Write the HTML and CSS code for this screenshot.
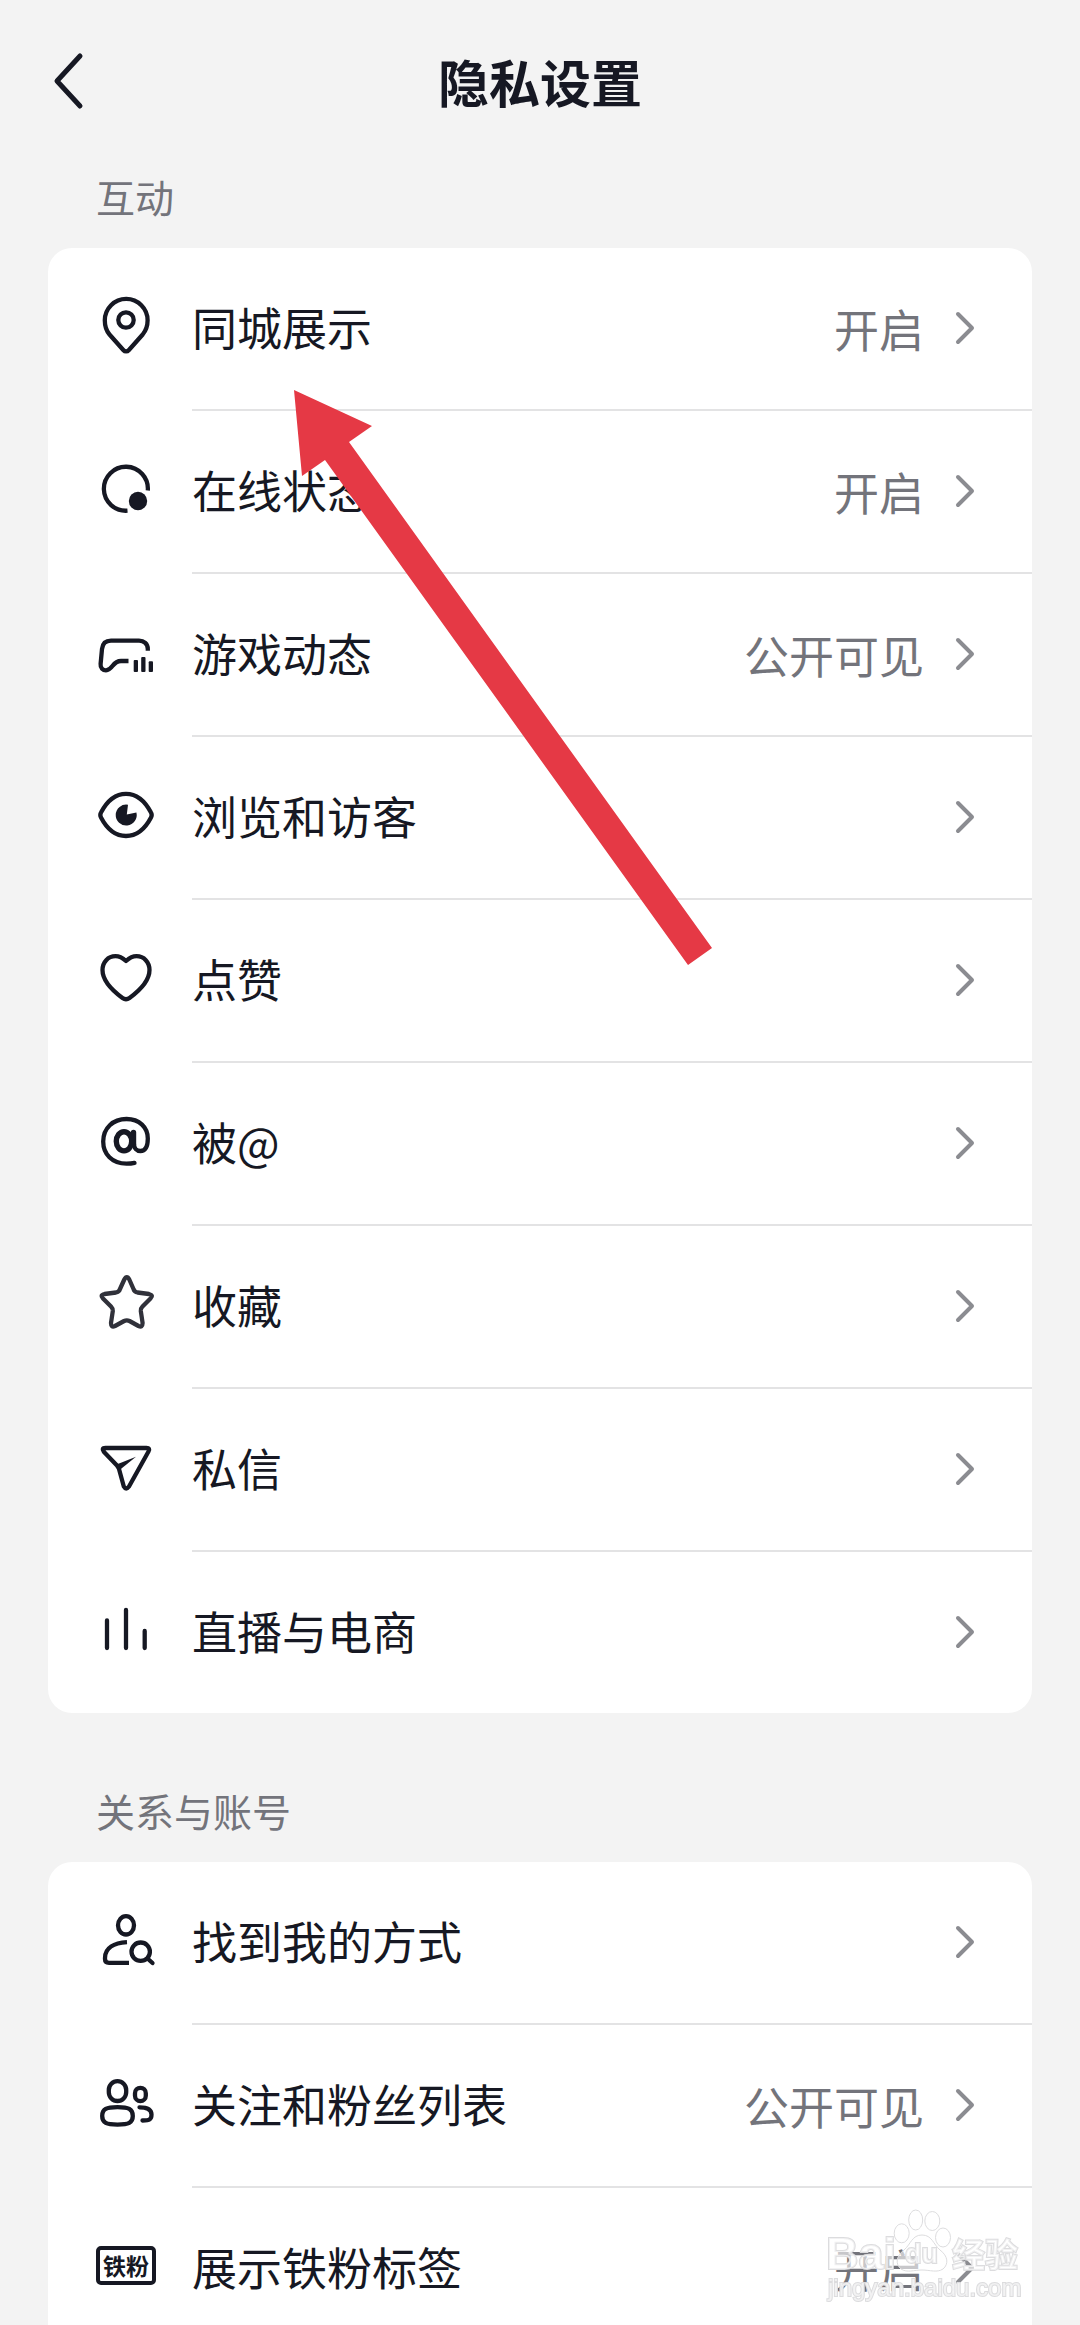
FILE: index.html
```
<!DOCTYPE html>
<html lang="zh-CN">

<head>
    <meta charset="UTF-8">
    <meta name="viewport" content="width=device-width, initial-scale=1.0">
    <title>隐私设置</title>
    <link rel="stylesheet" href="styles.css">
</head>

<body>
    <svg class="sprite" aria-hidden="true">
        <symbol id="arrow" viewBox="0 0 24 36">
            <path d="M5 4l14 14L5 32" />
        </symbol>
    </svg>

    <div class="page">
        <header class="header">
            <button class="back" aria-label="返回">
                <svg viewBox="0 0 36 60"><path d="M30 5L7 30l23 25" /></svg>
            </button>
            <h1>隐私设置</h1>
        </header>

        <main>
            <section>
                <h2>互动</h2>
                <div class="card">
                    <a class="row" href="#city">
                        <svg class="icon" viewBox="0 0 60 60">
                            <path d="M27.5 55.2L13.5 39.5C10 35.5 8.8 31 8.8 25.3a21.4 21.4 0 0 1 42.8 0C51.6 31 50 35.5 46.7 39.5L32.7 55.2a3.5 3.5 0 0 1-5.2 0z" />
                            <circle cx="30" cy="25" r="7.7" />
                        </svg>
                        <span class="info"><span class="name">同城展示</span><span class="value">开启</span><svg class="arrow"><use href="#arrow" /></svg></span>
                    </a>
                    <a class="row" href="#online">
                        <svg class="icon" viewBox="0 0 60 60">
                            <path d="M31.5 52.7A22 22 0 1 1 51.8 32.5" />
                            <circle class="fill" cx="42" cy="43" r="9.2" />
                        </svg>
                        <span class="info"><span class="name">在线状态</span><span class="value">开启</span><svg class="arrow"><use href="#arrow" /></svg></span>
                    </a>
                    <a class="row" href="#games">
                        <svg class="icon" viewBox="0 0 60 60">
                            <path d="M51.8 29.7V28C51.8 23 48 19.6 43 19.6H15C9 19.6 6.5 23 6 28L4.6 43C4.2 47 7 49.3 10 49.3C17 49.3 16 40 25 40H32.5" />
                            <rect class="fill" x="37.7" y="39" width="4.3" height="12" rx="1" />
                            <rect class="fill" x="45.2" y="36" width="4.3" height="15" rx="1" />
                            <rect class="fill" x="52.7" y="40.3" width="4.3" height="10.7" rx="1" />
                        </svg>
                        <span class="info"><span class="name">游戏动态</span><span class="value">公开可见</span><svg class="arrow"><use href="#arrow" /></svg></span>
                    </a>
                    <a class="row" href="#visitors">
                        <svg class="icon" viewBox="0 0 60 60">
                            <path d="M5 28.5C11 17 20 9.8 30 9.8S49 17 55 28.5C56 30.3 56 31.7 55 33.5C49 45 40 52 30 52S11 45 5 33.5C4 31.7 4 30.3 5 28.5z" />
                            <path class="fill" d="M32 20.7A10.5 10.5 0 1 0 40.4 28.5L30.8 30.5z" />
                        </svg>
                        <span class="info"><span class="name">浏览和访客</span><svg class="arrow"><use href="#arrow" /></svg></span>
                    </a>
                    <a class="row" href="#likes">
                        <svg class="icon" viewBox="0 0 60 60">
                            <path d="M30 14C27 11.3 23.5 9.2 19.5 9.2C12 9.2 6.5 15.2 6.5 23C6.5 34 17 44 26.5 51C29 52.8 31 52.8 33.5 51C43 44 53.5 34 53.5 23C53.5 15.2 48 9.2 40.5 9.2C36.5 9.2 33 11.3 30 14z" />
                        </svg>
                        <span class="info"><span class="name">点赞</span><svg class="arrow"><use href="#arrow" /></svg></span>
                    </a>
                    <a class="row" href="#mentions">
                        <svg class="icon round" viewBox="0 0 60 60">
                            <path d="M38.5 52.9C36 53.5 33 53.7 30.5 53.7C16 53.7 7.2 44 7.2 31.5C7.2 18 17 9 30.5 9C43.5 9 51.8 17.5 51.8 28.5C51.8 36 49.5 41 44.5 41C40.5 41 38 38 38 34" />
                            <path class="bold" d="M37.5 22.5V34" />
                            <ellipse class="bold" cx="28" cy="31.3" rx="7.7" ry="9.6" />
                        </svg>
                        <span class="info"><span class="name">被@</span><svg class="arrow"><use href="#arrow" /></svg></span>
                    </a>
                    <a class="row" href="#favorites">
                        <svg class="icon soft" viewBox="0 0 60 60">
                            <path d="M28.3 6.5Q30.8 1.8 33.3 6.5L37.5 16Q38.5 19 41.5 19.5L53 21Q58 22 54.5 25.5L46.5 33.5Q44.5 35.5 44.8 38L46.6 50Q46.5 55 42.5 53L33.5 48Q30.8 46.7 28.1 48L19 53Q15 55 15 50L16.8 38Q17 35.5 15 33.5L7 25.5Q3.5 22 8.5 21L20 19.5Q23 19 24 16z" />
                        </svg>
                        <span class="info"><span class="name">收藏</span><svg class="arrow"><use href="#arrow" /></svg></span>
                    </a>
                    <a class="row" href="#messages">
                        <svg class="icon" viewBox="0 0 60 60">
                            <path d="M9.5 12H50.5Q54.5 12 52.5 15.5L33 50.5Q30 54.5 27.8 50.5L23 33Q22.5 31.3 21 29.5L7.8 15.8Q5 12 9.5 12z" />
                            <path class="fill" d="M20.5 28.5L40 20.7L23 34.5z" />
                        </svg>
                        <span class="info"><span class="name">私信</span><svg class="arrow"><use href="#arrow" /></svg></span>
                    </a>
                    <a class="row" href="#live">
                        <svg class="icon round" viewBox="0 0 60 60">
                            <path d="M11 22.5V50M30 12V50M48.7 33V50" />
                        </svg>
                        <span class="info"><span class="name">直播与电商</span><svg class="arrow"><use href="#arrow" /></svg></span>
                    </a>
                </div>
            </section>

            <section>
                <h2>关系与账号</h2>
                <div class="card">
                    <a class="row" href="#find-me">
                        <svg class="icon" viewBox="0 0 60 60">
                            <ellipse cx="30" cy="16.3" rx="8" ry="9.2" />
                            <path d="M31 33.2C18 34 9 39 9 49V50Q9 53.8 13 53.8H33" />
                            <circle cx="44.7" cy="42.7" r="9.2" />
                            <path class="cap" d="M51.5 49.5L56.5 54" />
                        </svg>
                        <span class="info"><span class="name">找到我的方式</span><svg class="arrow"><use href="#arrow" /></svg></span>
                    </a>
                    <a class="row" href="#follow-list">
                        <svg class="icon round" viewBox="0 0 60 60">
                            <rect x="12.8" y="9.2" width="17.4" height="19.8" rx="8.7" />
                            <path d="M6.2 44C6.2 37 10.5 35.2 21.5 35.2S36.8 37 36.8 44S32.5 52.6 21.5 52.6S6.2 51 6.2 44z" />
                            <rect x="39" y="15.8" width="10.8" height="13.3" rx="5.4" />
                            <path d="M43.5 35.3C51 35.3 55.5 37 55.5 42.5C55.5 47 54 48.5 46.5 48.5" />
                        </svg>
                        <span class="info"><span class="name">关注和粉丝列表</span><span class="value">公开可见</span><svg class="arrow"><use href="#arrow" /></svg></span>
                    </a>
                    <a class="row" href="#fan-badge">
                        <span class="badge">铁粉</span>
                        <span class="info"><span class="name">展示铁粉标签</span><span class="value">开启</span><svg class="arrow"><use href="#arrow" /></svg></span>
                    </a>
                </div>
            </section>
        </main>
    </div>

    <svg class="pointer" viewBox="0 0 420 576" aria-hidden="true">
        <path d="M0 0L78 36L55 52L418 558L394 575L31 70L8 86z" />
    </svg>

    <svg class="watermark" viewBox="0 0 210 105" aria-hidden="true">
        <text class="logo" x="6" y="64">Bai</text>
        <ellipse cx="81.7" cy="28.3" rx="7.5" ry="9.5" />
        <ellipse cx="95.7" cy="15" rx="7" ry="10" />
        <ellipse cx="112.3" cy="16" rx="7.5" ry="9.5" />
        <ellipse cx="123" cy="32.5" rx="7.5" ry="9.5" />
        <path d="M102 30C92 30 91 39 84 45C76 51 75 59 81 64C87 68 94 65 102 65S117 68 123 64C129 59 128 51 120 45C113 39 112 30 102 30z" />
        <text class="du" x="85" y="58">du</text>
        <text class="cn" x="132" y="62">经验</text>
        <text class="url" x="8" y="91">jingyan.baidu.com</text>
    </svg>
</body>

</html>
```
FILE: styles.css
```
* {
    box-sizing: border-box;
}

body {
    margin: 0;
    background: #f3f3f3;
    color: #161823;
    font-family: "Noto Sans CJK SC", sans-serif;
}

.sprite {
    display: none;
}

.page {
    height: 100vh;
    overflow-y: auto;
    scrollbar-width: none;
}

.header {
    display: grid;
    grid-template-columns: 100px 1fr 100px;
    align-items: center;
    height: 166px;
    padding-bottom: 4px;
}

.header h1 {
    margin: 0;
    font-size: 51px;
    line-height: 60px;
    font-weight: 700;
    text-align: center;
}

.back {
    display: flex;
    padding: 0 0 0 50px;
    border: none;
    background: none;
    cursor: pointer;
}

.back svg {
    width: 36px;
    height: 60px;
    fill: none;
    stroke: #161823;
    stroke-width: 5;
    stroke-linecap: round;
    stroke-linejoin: round;
}

main {
    display: flex;
    flex-direction: column;
    gap: 67px;
    padding: 0 48px 60px;
}

h2 {
    margin: 0 48px 22px;
    font-size: 39px;
    line-height: 60px;
    font-weight: 400;
    color: #73747b;
}

.card {
    background: white;
    border-radius: 24px;
    overflow: hidden;
}

.row {
    display: flex;
    align-items: center;
    gap: 36px;
    padding-left: 48px;
    color: inherit;
    text-decoration: none;
}

.info {
    flex: 1;
    display: flex;
    align-items: center;
    height: 163px;
    padding-right: 55px;
    border-bottom: 2px solid #e3e3e4;
    font-size: 45px;
    line-height: 60px;
}

.row:last-child .info {
    height: 161px;
    border-bottom: none;
}

.name {
    flex: 1;
    padding-bottom: 4px;
}

.value {
    margin-right: 29px;
    color: #73747b;
}

.arrow {
    width: 24px;
    height: 36px;
    margin-bottom: 2px;
    fill: none;
    stroke: #8b8c91;
    stroke-width: 4;
    stroke-linecap: round;
    stroke-linejoin: round;
}

.icon {
    width: 60px;
    height: 60px;
    margin-bottom: 9px;
    fill: none;
    stroke: #161823;
    stroke-width: 4.3;
    stroke-linejoin: round;
}

.icon .fill {
    fill: #161823;
    stroke: none;
}

.icon .bold {
    stroke-width: 5.4;
}

.round,
.icon .cap {
    stroke-linecap: round;
}

.soft {
    stroke: #30313a;
}

.badge {
    width: 60px;
    height: 39px;
    margin-bottom: 6px;
    border: 4px solid #161823;
    border-radius: 5px;
    font-size: 23px;
    line-height: 30px;
    font-weight: 700;
    text-align: center;
}

/* red arrow over the list */
.pointer {
    position: absolute;
    top: 390px;
    left: 294px;
    width: 420px;
    height: 576px;
    fill: #e53945;
    pointer-events: none;
}

.watermark {
    position: fixed;
    right: 50px;
    bottom: 15px;
    width: 210px;
    height: 105px;
    fill: rgba(255, 255, 255, 0.6);
    stroke: #dcdcde;
    stroke-width: 1;
    font-family: "Liberation Sans", "Noto Sans CJK SC", sans-serif;
    pointer-events: none;
}

.watermark text {
    stroke-width: 2;
    paint-order: stroke;
}

.logo {
    font-size: 45px;
    font-weight: 700;
}

.du {
    font-size: 27px;
    font-weight: 700;
}

.cn {
    font-size: 33px;
    font-weight: 700;
}

.url {
    font-size: 24px;
}
```
